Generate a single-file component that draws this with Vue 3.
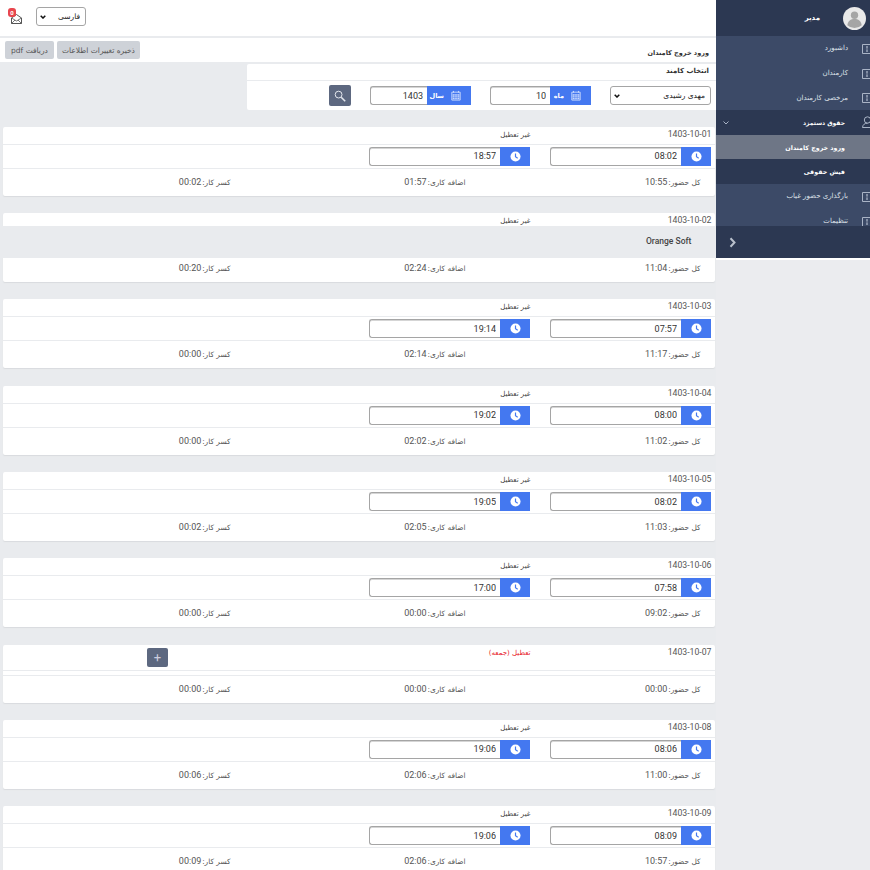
<script setup>
const days = [
  { date: '1403-10-01', start: '08:02', end: '18:57', total: '10:55', extra: '01:57', less: '00:02' },
  { date: '1403-10-02', start: '08:20', end: '19:24', total: '11:04', extra: '02:24', less: '00:20' },
  { date: '1403-10-03', start: '07:57', end: '19:14', total: '11:17', extra: '02:14', less: '00:00' },
  { date: '1403-10-04', start: '08:00', end: '19:02', total: '11:02', extra: '02:02', less: '00:00' },
  { date: '1403-10-05', start: '08:02', end: '19:05', total: '11:03', extra: '02:05', less: '00:02' },
  { date: '1403-10-06', start: '07:58', end: '17:00', total: '09:02', extra: '00:00', less: '00:00' },
  { date: '1403-10-07', holiday: true, total: '00:00', extra: '00:00', less: '00:00' },
  { date: '1403-10-08', start: '08:06', end: '19:06', total: '11:00', extra: '02:06', less: '00:06' },
  { date: '1403-10-09', start: '08:09', end: '19:06', total: '10:57', extra: '02:06', less: '00:09' },
]

const menu = [
  { label: 'داشبورد', kind: 'light' },
  { label: 'کارمندان', kind: 'light' },
  { label: 'مرخصی کارمندان', kind: 'light' },
  { label: 'حقوق دستمزد', kind: 'parent' },
  { label: 'ورود خروج کامندان', kind: 'active' },
  { label: 'فیش حقوقی', kind: 'sub' },
  { label: 'بارگذاری حضور غیاب', kind: 'light' },
  { label: 'تنظیمات', kind: 'light' },
]
</script>

<template>
  <div class="page">
    <!-- ستون اصلی -->
    <main class="main">
      <header class="topbar">
        <div class="mail">
          <svg width="11" height="10" viewBox="0 0 11 10">
            <path d="M.5 4L5.500.5l5 3.500v5.500H.5z" fill="#fff" stroke="#555" />
            <path d="M.5 4l5 3 5-3M.5 9.500l3.500-3.500M10.500 9.500L7 6" fill="none" stroke="#555" stroke-width=".8" />
          </svg>
          <span class="badge">0</span>
        </div>
        <div class="sel lang">
          <select>
            <option>فارسی</option>
          </select>
          <svg width="6" height="4" viewBox="0 0 6 4"><path d="M.7.7L3 3 5.300.7" fill="none" stroke="#111" stroke-width="1.500" /></svg>
        </div>
      </header>

      <section class="titlebar">
        <h1>ورود خروج کامندان</h1>
        <div class="actions">
          <button class="save">ذخیره تغییرات اطلاعات</button>
          <button class="pdf">دریافت pdf</button>
        </div>
      </section>

      <section class="filter">
        <div class="filter-head">انتخاب کامند</div>
        <div class="filter-row">
          <div class="sel person">
            <select>
              <option>مهدی رشیدی</option>
            </select>
            <svg width="6" height="4" viewBox="0 0 6 4"><path d="M.7.7L3 3 5.300.7" fill="none" stroke="#111" stroke-width="1.500" /></svg>
          </div>
          <div class="group">
            <span class="addon wide">
              <svg width="10" height="11" viewBox="0 0 12 12"><path d="M1 2h10v9.500H1zM3 .5v2M9 .5v2" fill="none" stroke="#dbe6ff" /><path d="M2 4.500h8v6H2z" fill="#dbe6ff" /><path d="M2 6.500h8M2 8.500h8M4 4.500v6M6 4.500v6M8 4.500v6" stroke="#4478f0" stroke-width=".6" /></svg>
              <b>ماه</b>
            </span>
            <input value="10" readonly />
          </div>
          <div class="group">
            <span class="addon wide year">
              <svg width="10" height="11" viewBox="0 0 12 12"><path d="M1 2h10v9.500H1zM3 .5v2M9 .5v2" fill="none" stroke="#dbe6ff" /><path d="M2 4.500h8v6H2z" fill="#dbe6ff" /><path d="M2 6.500h8M2 8.500h8M4 4.500v6M6 4.500v6M8 4.500v6" stroke="#4478f0" stroke-width=".6" /></svg>
              <b>سال</b>
            </span>
            <input value="1403" readonly />
          </div>
          <button class="search">
            <svg width="12" height="12" viewBox="0 0 12 12"><circle cx="4.600" cy="4.600" r="3.400" fill="none" stroke="#e4e7ee" stroke-width="1" /><path d="M7.200 7.200l4 4" stroke="#e4e7ee" stroke-width="1.600" /></svg>
          </button>
        </div>
      </section>

      <section class="days">
        <article v-for="d in days" :key="d.date" class="day" :class="{ off: d.holiday }">
          <div class="day-head">
            <span class="date">{{ d.date }}</span>
            <span class="state" :class="{ red: d.holiday }">{{ d.holiday ? 'تعطیل (جمعه)' : 'غیر تعطیل' }}</span>
            <button v-if="d.holiday" class="plus">+</button>
          </div>
          <div class="day-times">
            <template v-if="!d.holiday">
              <div v-for="t in [d.start, d.end]" :key="t" class="time">
                <span class="addon">
                  <svg width="11" height="11" viewBox="0 0 12 12"><circle cx="6" cy="6" r="5.500" fill="#fff" /><path d="M6 2.600V6.300l2.400 1.500" fill="none" stroke="#4478f0" stroke-width="1.300" /></svg>
                </span>
                <input :value="t" readonly />
              </div>
            </template>
          </div>
          <div class="day-sum">
            <span>کل حضور: <i>{{ d.total }}</i></span>
            <span>اضافه کاری: <i>{{ d.extra }}</i></span>
            <span>کسر کار: <i>{{ d.less }}</i></span>
          </div>
        </article>
      </section>

      <footer class="foot">Orange Soft</footer>
    </main>

    <!-- منوی کناری -->
    <aside class="side">
      <div class="user">
        <span class="avatar">
          <svg width="23" height="23" viewBox="0 0 24 24"><circle cx="12" cy="12" r="12" fill="#e9e9e9" /><circle cx="12" cy="8.600" r="3.800" fill="#a5a5a5" /><path d="M4.500 19c.6-4.400 3.600-6.400 7.500-6.400s6.900 2 7.500 6.400a11 11 0 0 1-15 0z" fill="#a5a5a5" /></svg>
        </span>
        <span class="user-name">مدیر</span>
      </div>
      <nav class="menu">
        <a v-for="m in menu" :key="m.label" class="item" :class="m.kind">
          <svg v-if="m.kind === 'light'" class="ico" width="9" height="10" viewBox="0 0 9 10"><path d="M9 .5H.5v9H9" fill="none" stroke="#aab4c6" /><path d="M5 2v6M4 3h2M4 7h2" stroke="#aab4c6" stroke-width=".8" /></svg>
          <svg v-if="m.kind === 'parent'" class="ico person-ico" width="11" height="12" viewBox="0 0 11 12"><circle cx="5.500" cy="4" r="3.200" fill="none" stroke="#aab4c6" /><path d="M.5 11.500c.3-3 2.200-4.300 5-4.300M.5 11.500h10" fill="none" stroke="#aab4c6" /></svg>
          <span>{{ m.label }}</span>
          <svg v-if="m.kind === 'parent'" class="chev" width="6" height="4" viewBox="0 0 6 4"><path d="M.5.500L3 3 5.500.500" fill="none" stroke="#aab4c6" /></svg>
        </a>
      </nav>
      <div class="toggle">
        <svg width="8" height="11" viewBox="0 0 8 11"><path d="M1.500 1.200L5.500 5.500 1.500 9.800" fill="none" stroke="#b9c0cc" stroke-width="2" /></svg>
      </div>
    </aside>
  </div>
</template>

<style>
html,
body {
  margin: 0;
  overflow: hidden;
}
</style>

<style scoped>
.page {
  position: relative;
  display: flex;
  width: 870px;
  height: 870px;
  overflow: hidden;
  background: #ebecef;
  font-family: "DejaVu Sans", sans-serif;
  color: #333;
  font-size: 7.500px;
}

.main {
  position: relative;
  width: 716px;
  flex: none;
  background: #e9ebee;
}

.topbar {
  display: flex;
  align-items: center;
  height: 36px;
  background: #fff;
  box-sizing: border-box;
  padding-left: 7px;
  margin-bottom: 2px;
}

.mail {
  position: relative;
  width: 18px;
  height: 18px;
  margin-right: 11px;
  margin-top: -6px;
}

.mail svg {
  position: absolute;
  left: 4px;
  top: 8px;
}

.badge {
  position: absolute;
  left: 1px;
  top: 2px;
  width: 8px;
  height: 9px;
  border-radius: 3px;
  background: #e8464e;
  color: #fff;
  font: bold 6px/9px "Roboto", sans-serif;
  text-align: center;
}

.sel {
  position: relative;
  height: 19px;
  flex: none;
}

.sel select {
  box-sizing: border-box;
  width: 100%;
  height: 100%;
  padding: 0 5px 0 12px;
  appearance: none;
  direction: rtl;
  background: #fff;
  border: 1px solid #a5a5a5;
  border-radius: 3px;
  color: #222;
  font: 7.500px "DejaVu Sans", sans-serif;
}

.sel svg {
  position: absolute;
  left: 4px;
  top: 8px;
  pointer-events: none;
}

.lang {
  width: 50px;
  margin-top: -4px;
}

.titlebar {
  display: flex;
  align-items: center;
  justify-content: space-between;
  height: 24px;
  padding: 0 7px 0 5px;
  background: #fff;
  direction: rtl;
}

.titlebar h1 {
  margin: 6px 0 0;
  font-size: 6.500px;
  font-weight: bold;
  color: #333;
}

.actions {
  display: flex;
  gap: 3px;
}

.actions button {
  height: 18px;
  padding: 0;
  border: 0;
  border-radius: 2px;
  background: #ced2d8;
  color: #555;
  font-size: 7.500px;
  font-family: "DejaVu Sans", sans-serif;
}

.save {
  width: 83px;
}

.pdf {
  width: 49px;
}

.filter {
  width: 469px;
  margin: 2px 0 16.700px auto;
  background: #fff;
  border-radius: 2px 0 0 2px;
  direction: rtl;
}

.filter-head {
  height: 16px;
  line-height: 15px;
  padding: 0 7px;
  font-size: 7px;
  font-weight: bold;
  border-bottom: 1px solid #e9ebee;
}

.filter-row {
  display: flex;
  align-items: center;
  height: 29px;
  padding: 0 5px;
}

.person {
  width: 101px;
}

.group {
  display: flex;
  height: 19px;
  width: 101px;
  margin-right: 19px;
}

.group input {
  width: 60px;
  flex: 1;
  min-width: 0;
}

input {
  box-sizing: border-box;
  height: 100%;
  padding: 0 4px;
  border: 1px solid #a5a5a5;
  border-right: 0;
  border-radius: 3px 0 0 3px;
  box-shadow: inset 0 1px #d5d5d5;
  background: #fff;
  color: #333;
  outline: none;
  font: 9px "Roboto", sans-serif;
  direction: rtl;
}

.addon {
  display: flex;
  align-items: center;
  justify-content: center;
  flex: none;
  width: 30px;
  background: #4478f0;
}

.addon.wide {
  box-sizing: border-box;
  justify-content: flex-start;
  width: 41px;
  padding-right: 10px;
  gap: 7px;
}

.addon.year {
  width: 44px;
}

.addon b {
  color: #fff;
  font-size: 6.500px;
}

.search {
  display: flex;
  align-items: center;
  justify-content: center;
  width: 22px;
  height: 21px;
  padding: 0;
  margin-right: 19px;
  border: 0;
  border-radius: 2px;
  background: #5d6880;
}

.days {
  display: flex;
  flex-direction: column;
  gap: 17.330px;
  margin: 0 1.500px 0 3px;
  direction: rtl;
}

.day {
  background: #fff;
  border-radius: 2px;
  box-shadow: 0 1px 1px #d9dbde;
}

.day-head {
  position: relative;
  display: flex;
  height: 17px;
  align-items: flex-start;
  padding: 0 3px;
  line-height: 15px;
  border-bottom: 1px solid #e9ebee;
}

.date {
  width: 181px;
  font: 8.700px/14px "Roboto", sans-serif;
  color: #555;
  direction: ltr;
  text-align: right;
}

.state {
  font-size: 7px;
  line-height: 16px;
  color: #444;
}

.state.red {
  color: #e8232c;
}

.plus {
  position: absolute;
  left: 144px;
  top: 3px;
  width: 21px;
  height: 19px;
  padding: 0;
  border: 0;
  border-radius: 2px;
  background: #5d6880;
  color: #ccd;
  font: 13px/19px "Roboto", sans-serif;
}

.off .day-head {
  height: 25px;
}

.day-times {
  display: flex;
  align-items: center;
  height: 23px;
  padding: 0 3.500px;
  border-bottom: 1px solid #e9ebee;
  gap: 19.500px;
}

.off .day-times {
  height: 4px;
}

.time {
  display: flex;
  width: 161.500px;
  height: 19px;
}

.time input {
  flex: 1;
  min-width: 0;
}

.day-sum {
  display: flex;
  height: 26px;
  padding: 0 14px 1px 0;
  align-items: center;
  color: #555;
  font-size: 7.400px;
}

.day-sum span {
  flex: none;
  white-space: nowrap;
  width: 235px;
}

.day-sum span:last-child {
  width: auto;
}

.day-sum i {
  margin-right: -1.500px;
  font: 9px "Roboto", sans-serif;
  color: #555;
}

.foot {
  position: absolute;
  left: 0;
  top: 226px;
  width: 100%;
  height: 32px;
  padding-left: 646px;
  box-sizing: border-box;
  background: #e9ebee;
  font: 500 8.500px/30px "Roboto", sans-serif;
  color: #444;
}

.side {
  position: relative;
  display: flex;
  flex-direction: column;
  width: 154px;
  height: 258px;
  overflow: hidden;
  background: #2c3852;
  box-shadow: 0 2px 0 #fff;
  direction: rtl;
  color: #dfe3ea;
}

.user {
  display: flex;
  align-items: center;
  flex: none;
  height: 36px;
  padding-right: 4px;
}

.avatar {
  display: flex;
  width: 23px;
  height: 23px;
  margin-top: 1px;
}

.user-name {
  margin-right: 23px;
  font-size: 7px;
  font-weight: bold;
  color: #fff;
}

.menu {
  flex: 1;
  min-height: 0;
  overflow: hidden;
}

.item {
  position: relative;
  display: flex;
  align-items: center;
  height: 24.700px;
  padding-right: 22px;
  font-size: 7px;
}

.item.light {
  background: #3c4a67;
  color: #dfe3ea;
}

.item.parent,
.item.sub {
  background: #2c3852;
  font-weight: bold;
  color: #fff;
}

.item.active {
  background: #6e7686;
  font-weight: bold;
  color: #fff;
}

.item.active,
.item.sub {
  padding-right: 25px;
  font-size: 6.300px;
}

.item.parent {
  padding-right: 25px;
  font-size: 6px;
}

.ico {
  position: absolute;
  right: -1px;
  top: 8px;
}

.person-ico {
  right: -3px;
  top: 6px;
}

.chev {
  position: absolute;
  left: 7px;
  top: 11px;
}

.toggle {
  flex: none;
  display: flex;
  align-items: center;
  height: 32px;
  padding-left: 13px;
  background: #2c3852;
  direction: ltr;
}
</style>
